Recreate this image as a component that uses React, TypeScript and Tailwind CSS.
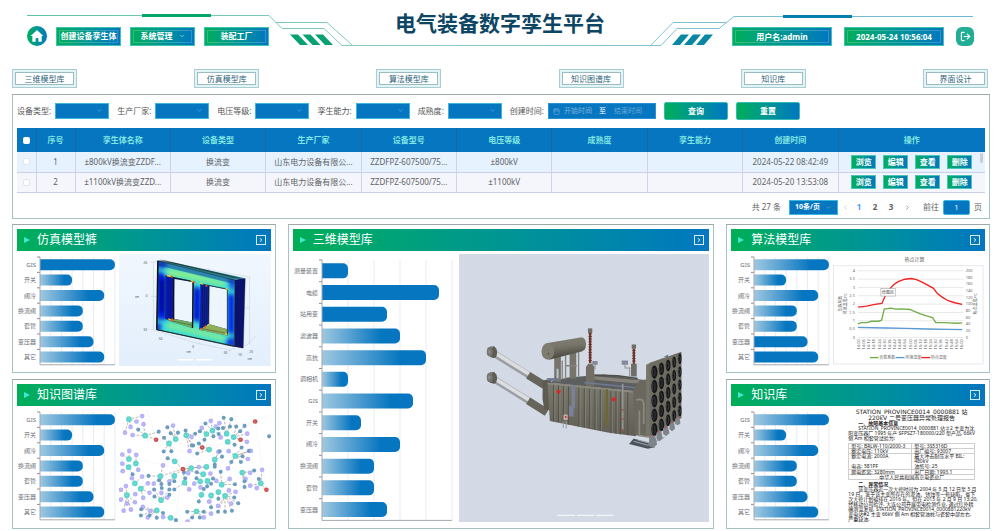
import React from 'react';
import { ChevronDown, ChevronLeft, ChevronRight, Calendar, LogOut } from 'lucide-react';

const tabs = ['三维模型库', '仿真模型库', '算法模型库', '知识图谱库', '知识库', '界面设计'];
const filters = ['设备类型', '生产厂家', '电压等级', '孪生能力', '成熟度'];
const columns = ['序号', '孪生体名称', '设备类型', '生产厂家', '设备型号', '电压等级', '成熟度', '孪生能力', '创建时间', '操作'];
const rows = [
  ['1', '±800kV换流变ZZDF...', '换流变', '山东电力设备有限公...', 'ZZDFPZ-607500/75...', '±800kV', '', '', '2024-05-22 08:42:49'],
  ['2', '±1100kV换流变ZZD...', '换流变', '山东电力设备有限公...', 'ZZDFPZ-607500/75...', '±1100kV', '', '', '2024-05-20 13:53:08'],
];
const actions = ['浏览', '编辑', '查看', '删除'];

type Bar = { name: string; value: number; solid?: boolean };

const smallBars: Bar[] = [
  { name: 'GIS', value: 7 },
  { name: '开关', value: 3 },
  { name: '阀冷', value: 6 },
  { name: '换流阀', value: 4 },
  { name: '套管', value: 4 },
  { name: '变压器', value: 5 },
  { name: '其它', value: 6 },
];
const simulationBars = smallBars.map((b, i) => ({ ...b, solid: i === 0 }));
const algorithmBars = smallBars.map((b, i) => ({ ...b, solid: i > 4 }));
const modelBars: Bar[] = [
  { name: '测量装置', value: 1, solid: true },
  { name: '电缆', value: 4.5, solid: true },
  { name: '站用变', value: 2.5, solid: true },
  { name: '滤波器', value: 3 },
  { name: '高抗', value: 4 },
  { name: '调相机', value: 1 },
  { name: 'GIS', value: 3.5 },
  { name: '开关', value: 1.5 },
  { name: '阀冷', value: 3 },
  { name: '换流阀', value: 2 },
  { name: '套管', value: 2 },
  { name: '变压器', value: 2.5 },
];

const gradient = 'bg-linear-to-r from-[#02ae56] to-[#0776c0]';

function HeaderLines() {
  return (
    <svg viewBox="0 0 1000 60" className="absolute inset-x-0 top-0 w-full" fill="none" aria-hidden="true">
      <defs>
        <linearGradient id="line" x1="0" x2="1000" y1="0" y2="0" gradientUnits="userSpaceOnUse">
          <stop offset="0" stopColor="#5cc49a" />
          <stop offset="0.45" stopColor="#8ecbcf" />
          <stop offset="1" stopColor="#6db5da" />
        </linearGradient>
      </defs>
      <g stroke="url(#line)">
        <path d="M27 15.5H269L282 28.5H324L342 45.5H661L677 28.5H719L734 16.5H973" />
        <path d="M276 22.5H327L352 45M651 45L673 22.5H726" />
      </g>
      <path d="M142 15.5H211" stroke="#05a768" strokeWidth="3" />
      <path d="M783 16.5H852" stroke="#0580ac" strokeWidth="3" />
      <path d="M290 34.500h8l10 10.500h-8zM302.500 34.500h8l10 10.500h-8zM315 34.500h8l10 10.500h-8z" fill="#06a173" />
      <path d="M681 34.500h8l-9 10.500h-8zM693 34.500h8l-9 10.500h-8zM705 34.500h8l-9 10.500h-8z" fill="#0787a3" />
    </svg>
  );
}

function Header() {
  const box = `${gradient} h-[19px] border border-[#3fc2b4] text-[8px] font-bold text-white outline outline-1 -outline-offset-4 outline-white/20`;
  return (
    <header className="relative h-[69px]">
      <HeaderLines />
      <div className="relative grid grid-cols-[1fr_auto_1fr]">
        <nav className="flex items-center gap-[9px] pt-[26px] pl-[27px]">
          <button aria-label="首页" className={`${gradient} flex size-5 items-center justify-center rounded-full text-white`}>
            <svg viewBox="0 0 24 24" className="size-4" fill="currentColor">
              <path d="M12 3 2.500 12H5v8.500h5V15h4v5.500h5V12h2.500z" />
            </svg>
          </button>
          <button className={`${box} w-[65px]`}>创建设备孪生体</button>
          <button className={`${box} flex w-[65px] items-center justify-center gap-1.5`}>
            系统管理 <ChevronDown size={6} strokeWidth={2} />
          </button>
          <button className={`${box} w-[65px]`}>装配工厂</button>
        </nav>
        <h1 className="pt-[9px] text-[21px] leading-7 font-bold text-[#0d4564]">电气装备数字孪生平台</h1>
        <div className="flex items-center justify-end gap-3 pt-[26px] pr-[26px]">
          <div className={`${box} w-[100px] text-center leading-[17px]`}>用户名:admin</div>
          <div className={`${box} w-[100px] text-center leading-[17px]`}>2024-05-24 10:56:04</div>
          <button aria-label="退出" className="flex h-[19px] w-[18px] items-center justify-center rounded-md bg-[#22ae95] text-white">
            <LogOut size={11} strokeWidth={2.5} />
          </button>
        </div>
      </div>
    </header>
  );
}

function Filters() {
  return (
    <form className="flex items-center gap-2 text-[8px] whitespace-nowrap text-[#555]">
      {filters.map((name) => (
        <label key={name} className="flex items-center gap-1">
          {name}:
          <span className="relative">
            <select className="block h-4 w-[54px] appearance-none border border-[#3cb6dc] bg-[#0776c0]" />
            <ChevronDown size={7} strokeWidth={1.5} className="pointer-events-none absolute top-1 right-1.5 text-[#8fbfe0]" />
          </span>
        </label>
      ))}
      <div className="flex items-center gap-1">
        <label htmlFor="start">创建时间:</label>
        <div className="flex h-4 w-[108px] items-center gap-1 border border-[#2a92d2] bg-[#0776c0] px-1 text-[7px] text-white">
          <Calendar size={7} strokeWidth={1.5} className="shrink-0 text-[#8fbfe0]" />
          <input id="start" placeholder="开始时间" className="w-[31px] min-w-0 placeholder:text-[#7db2dc]" />
          至
          <input aria-label="结束时间" placeholder="结束时间" className="ml-1 w-[31px] min-w-0 placeholder:text-[#6aa6d6]" />
        </div>
      </div>
      <button type="button" className={`${gradient} h-[18px] w-16 rounded-xs border border-[#35b9b0] font-bold text-white`}>查询</button>
      <button type="button" className={`${gradient} h-[18px] w-16 rounded-xs border border-[#35b9b0] font-bold text-white`}>重置</button>
    </form>
  );
}

function TwinTable() {
  return (
    <div className="relative mt-2">
      <table className="w-full table-fixed border-collapse text-center text-[8px] text-[#606266]">
        <colgroup>
          <col className="w-[19px]" />
          <col className="w-[39px]" />
          <col span={8} />
          <col className="w-[147px]" />
        </colgroup>
        <thead className="bg-[#0776c0] text-[#7fe6e2]">
          <tr className="h-6">
            <th className="border-r border-[#1b66a8]">
              <input type="checkbox" aria-label="全选" className="block mx-auto size-[7px] appearance-none rounded-xs bg-white" />
            </th>
            {columns.map((name) => (
              <th key={name} className="border-r border-[#1b66a8] font-bold last:border-r-0">{name}</th>
            ))}
          </tr>
        </thead>
        <tbody>
          {rows.map((row) => (
            <tr key={row[0]} className="h-5 border-b border-[#c9cfe8] odd:bg-[#e6f2fe] even:bg-[#f5f6fb]">
              <td className="border-r border-[#cfd3ea]">
                <input type="checkbox" aria-label={`选择 ${row[0]}`} className="block mx-auto size-[7px] appearance-none rounded-xs border border-[#e3e5ea] bg-white" />
              </td>
              {row.map((cell, i) => (
                <td key={i} className="overflow-hidden border-r border-[#cfd3ea] whitespace-nowrap">{cell}</td>
              ))}
              <td>
                <div className="flex justify-center gap-[7px]">
                  {actions.map((a) => (
                    <button key={a} className={`${gradient} h-3.5 w-[25px] border border-[#4cc4b8] leading-3 font-bold text-white`}>{a}</button>
                  ))}
                </div>
              </td>
            </tr>
          ))}
        </tbody>
      </table>
      <div className="absolute top-[25px] right-0.5 h-2.5 w-[3px] rounded-full bg-[#c9ced6]" />
    </div>
  );
}

function Pagination() {
  return (
    <div className="mt-[7px] flex items-center justify-end pr-[3px] text-[8px] text-[#606266]">
      <span className="mr-2">共 27 条</span>
      <span className="relative mr-px">
        <select aria-label="每页条数" className="block h-[15px] w-[49px] appearance-none border border-[#3cb6dc] bg-[#0776c0] pl-[5px] text-[7px] font-bold text-white">
          <option>10条/页</option>
        </select>
        <ChevronDown size={7} strokeWidth={1.5} className="pointer-events-none absolute top-1 right-1.5 text-[#8fbfe0]" />
      </span>
      <button aria-label="上一页" className="flex w-3 justify-center"><ChevronLeft size={7} className="text-[#b4b8c0]" /></button>
      <button className="w-4 font-bold text-[#409eff]">1</button>
      <button className="w-4 font-bold">2</button>
      <button className="w-4 font-bold">3</button>
      <button aria-label="下一页" className="flex w-4 justify-center"><ChevronRight size={7} /></button>
      <label className="ml-2 flex items-center gap-1">
        前往
        <input defaultValue="1" className="h-[15px] w-[27px] rounded-xs border border-[#3cb6dc] bg-[#0776c0] text-center text-[7px] text-white" />
        页
      </label>
    </div>
  );
}

function Card({ title, children }: { title: string; children: React.ReactNode }) {
  return (
    <section className="flex flex-1 flex-col border border-[#a5c3c4] border-t-[#9fa9ab] px-1 pt-1 pb-1.5">
      <div className={`${gradient} flex h-[22px] items-center pr-[5px] pl-[7px] text-white`}>
        <svg viewBox="0 0 18 18" className="size-1.5 text-[#45e6cf]" aria-hidden="true">
          <path d="M0 0 18 9 0 18z" fill="currentColor" />
        </svg>
        <h2 className="ml-[7px] flex-1 text-xs leading-[22px]">{title}</h2>
        <button aria-label={`${title}详情`} className="flex size-2.5 items-center justify-center border border-[#d5ecf6]">
          <ChevronRight size={6} strokeWidth={4} />
        </button>
      </div>
      <div className="mt-[3px] flex flex-1">{children}</div>
    </section>
  );
}

type ChartProps = {
  bars: Bar[];
  width: number;
  height: number;
  axis: number;
  top: number;
  step: number;
  unit: number;
  thick: number;
  ticks: number;
  label: number;
};

function BarChart({ bars, width, height, axis, top, step, unit, thick, ticks, label }: ChartProps) {
  const bottom = top + step * bars.length;
  return (
    <svg viewBox={`0 0 ${width} ${height}`} className="w-full" role="img">
      <defs>
        <linearGradient id="bar">
          <stop offset="0" stopColor="#9fc8e1" />
          <stop offset="0.75" stopColor="#0776c0" />
        </linearGradient>
      </defs>
      {Array.from({ length: ticks }, (_, i) => (
        <path key={i} d={`M${axis + unit * (i + 1)} ${top}V${bottom}`} stroke="#e8ebf5" />
      ))}
      {bars.map((b, i) => {
        const y = top + step * i + (step - thick) / 2;
        const w = b.value * unit;
        const r = 5;
        return (
          <g key={b.name}>
            <path d={`M${axis - 3} ${top + step * i}H${axis}`} stroke="#8a8e96" />
            <path
              d={`M${axis} ${y}h${w - r}a${r} ${r} 0 0 1 ${r} ${r}v${thick - 2 * r}a${r} ${r} 0 0 1 ${-r} ${r}H${axis}z`}
              fill={b.solid ? '#0776c0' : 'url(#bar)'}
            />
            <text x={axis - 4} y={y + thick / 2 + 2} textAnchor="end" fontSize={label} fill="#6e7079">{b.name}</text>
          </g>
        );
      })}
      <path d={`M${axis} ${top}V${bottom}H${axis + unit * ticks}`} fill="none" stroke="#a4a8b0" />
    </svg>
  );
}

function SmallChart({ bars }: { bars: Bar[] }) {
  return (
    <div className="w-[102px] shrink-0">
      <BarChart bars={bars} width={102} height={112} axis={23} top={3} step={15.4} unit={10.7} thick={11} ticks={7} label={6} />
    </div>
  );
}

function CoreField() {
  return (
    <svg viewBox="356 104 458 333" className="w-full min-w-0 flex-1" preserveAspectRatio="none" role="img">
      <defs>
        <linearGradient id="sky" x1="0" y1="0" x2="0" y2="1">
          <stop offset="0" stopColor="#f1f7fe" />
          <stop offset="1" stopColor="#e3effc" />
        </linearGradient>
        <clipPath id="core">
          <path d="M475 124 706 181 704 378 470 328z" />
        </clipPath>
        <filter id="soft"><feGaussianBlur stdDeviation="7" /></filter>
      </defs>
      <path d="M356 104H814V437H356z" fill="url(#sky)" />
      <g stroke="#b3b9c2" fill="none">
        <path d="M475 124 460 128V328L590 368 690 388 745 372 770 345M475 124 625 150 750 172V371M452 128h8M450 229h10M452 328h8M500 340l-8 8M600 364l-6 8M690 386v8M625 145v8M736 262l14 4M460 229 475 232" />
      </g>
      <path d="M475 124 705 180 737 176 520 129z" fill="#2b8f9c" />
      <path d="M706 180 737 176 731 382 704 378z" fill="#08127e" />
      <path d="M475 124 706 180 704 378 470 328z" fill="#38dcd6" />
      <g clipPath="url(#core)">
        <g filter="url(#soft)">
          <path d="M468 156 502 164V300L466 296z" fill="#001ce0" />
          <path d="M478 180h16v95h-16z" fill="#000a90" />
          <path d="M580 200 604 206V306L578 300z" fill="#0018d8" />
          <path d="M684 222 706 224V342L684 338z" fill="#0026e8" />
          <path d="M470 118 500 126V148L466 144z" fill="#0834dc" />
          <path d="M682 170 708 178V214L690 204z" fill="#0a52e8" />
          <path d="M464 300 486 316 480 335H464z" fill="#0834dc" />
          <path d="M680 355 710 350V384L678 374z" fill="#0834dc" />
          <path d="M500 148 576 160 680 188 676 200 590 182 500 166z" fill="#8df08a" />
          <path d="M502 306 582 322 680 346 670 362 500 322z" fill="#7bea9a" />
        </g>
        <path d="M475 125 706 181 705 193 475 138z" fill="#123a9e" fillOpacity="0.55" />
      </g>
      <path d="M496 168 580 184 578 323 515 304 495 296z" fill="#10346c" />
      <path d="M498 170 521 178 519 296 497 294z" fill="#0718b4" />
      <path d="M523 178 578 187 577 307 521 296z" fill="#edf5fd" />
      <path d="M521 296 577 307V323L508 303z" fill="#6fae62" />
      <path d="M601 192 683 208V345L598 328z" fill="#1c46b8" />
      <path d="M603 196 627 199V312L600 327z" fill="#0c1f9c" />
      <path d="M629 199 683 209V327L627 311z" fill="#edf5fd" />
      <path d="M627 311 683 327V345L598 328z" fill="#8fae58" />
      <g stroke="#111" fill="none">
        <path d="M475 124 706 181 704 378 470 328z" strokeWidth="2" />
        <path d="M473 124 470 328" strokeWidth="4" />
        <path d="M521 176V298M580 184 578 323" strokeWidth="4" />
        <path d="M627 198V314M683 208V345M498 169 580 186M601 192 683 208M470 328 731 382" strokeWidth="2" />
        <path d="M480 122 710 176M486 122 718 176M494 124 728 177M512 177V300M505 173V298M608 197V325M614 197V320M620 198V317M711 180 709 379M717 179 714 380M723 178 720 381M730 177 726 382M737 176 731 382" />
        <path d="M515 302 577 315M606 325 683 339" />
      </g>
      <path d="M500 168l12 3M505 296l8 4M573 182l8 5M600 190l10 3M678 206l6 3M622 316l8-4M677 337l5 7" stroke="#e8d23a" strokeWidth="4" />
      <g fill="#f0561e">
        <circle cx="516" cy="171" r="3" /><circle cx="583" cy="188" r="3" /><circle cx="620" cy="198" r="3" />
        <circle cx="516" cy="299" r="4" /><circle cx="604" cy="325" r="3" /><circle cx="616" cy="319" r="3" />
      </g>
      <g fill="#444" fontSize="9">
        <text x="428" y="133">-50</text><text x="437" y="232">0</text><text x="430" y="332">50</text>
        <text x="404" y="233">cm</text><text x="474" y="360">-50</text><text x="577" y="381">0</text>
        <text x="560" y="398">cm</text><text x="672" y="401">50</text><text x="716" y="407">10</text>
        <text x="747" y="397">-10</text><text x="744" y="418">cm</text>
      </g>
      <path d="M534 417h46M590 417h46" stroke="#fff" strokeWidth="4" />
    </svg>
  );
}

// device nodes, the other two kinds hang off the closest one
const teal = [
  [386, 134], [435, 183], [507, 206], [527, 193], [559, 182], [620, 178], [638, 168], [681, 177], [702, 187], [684, 201],
  [628, 224], [645, 254], [707, 243], [386, 252], [407, 265], [385, 276], [404, 324], [422, 340], [380, 359], [481, 303],
  [523, 302], [524, 259], [483, 374], [470, 404], [512, 426], [574, 279], [620, 275], [610, 297], [554, 322], [601, 318],
  [623, 317], [605, 358], [666, 328], [656, 350], [634, 360], [676, 361], [728, 292], [784, 324], [590, 407],
];
const violet = [
  [426, 125], [409, 141], [391, 157], [430, 149], [374, 174], [397, 181], [519, 153], [633, 139], [659, 146], [648, 156],
  [575, 187], [569, 229], [606, 160], [743, 177], [742, 201], [663, 188], [656, 231], [687, 229], [754, 228], [745, 252],
  [685, 280], [366, 239], [387, 228], [408, 240], [366, 266], [367, 288], [489, 271], [414, 284], [426, 304], [395, 309],
  [377, 332], [362, 343], [362, 372], [380, 384], [404, 380], [405, 356], [429, 367], [428, 394], [448, 352], [443, 324],
  [461, 325], [370, 405], [392, 402], [450, 406], [443, 425], [489, 424], [597, 276], [632, 295], [565, 294], [583, 325],
  [568, 342], [602, 336], [650, 317], [690, 311], [688, 345], [708, 349], [695, 384], [655, 391], [628, 378], [788, 284],
  [752, 293], [738, 311], [772, 338], [752, 331], [563, 437], [612, 425], [634, 414], [508, 318], [484, 352], [502, 366],
];
const steel = [
  [414, 165], [476, 171], [492, 189], [502, 158], [534, 174], [512, 176], [557, 168], [586, 177], [600, 170], [672, 130],
  [695, 134], [617, 147], [656, 162], [670, 160], [691, 156], [710, 156], [735, 154], [722, 170], [641, 185], [657, 178],
  [580, 212], [597, 206], [614, 195], [592, 236], [576, 212], [705, 210], [726, 218], [748, 228], [729, 244], [660, 229],
  [667, 245], [695, 261], [645, 268], [663, 290], [724, 261], [809, 185], [491, 230], [514, 229], [503, 250], [477, 315],
  [445, 302], [397, 297], [462, 342], [485, 338], [508, 326], [523, 318], [523, 342], [508, 342], [463, 363], [508, 358],
  [484, 326], [556, 309], [552, 292], [591, 291], [590, 309], [640, 310], [645, 275], [612, 341], [622, 333], [634, 325],
  [597, 378], [634, 395], [656, 370], [676, 408], [655, 408], [697, 405], [716, 383], [704, 366], [706, 327], [735, 335],
  [778, 311], [764, 286], [735, 318], [423, 401], [422, 419], [448, 419], [470, 426], [489, 412], [562, 408], [577, 425],
  [600, 425], [612, 408], [528, 433],
];
const red = [[767, 141], [468, 195], [723, 195], [607, 218], [549, 282], [801, 343]];

function nearest(x: number, y: number) {
  return teal.reduce((best, t) => (Math.hypot(t[0] - x, t[1] - y) < Math.hypot(best[0] - x, best[1] - y) ? t : best));
}

function KnowledgeGraph() {
  return (
    <svg viewBox="356 104 458 333" className="w-full min-w-0 flex-1" preserveAspectRatio="none" role="img">
      <g stroke="#f0ebe9">
        {red.flatMap(([x, y], i) => red.slice(i + 1).map(([a, b]) => <path key={`${x}-${a}`} d={`M${x} ${y}L${a} ${b}`} />))}
        <path d="M468 195 440 104M468 195 356 104M549 282 525 437M767 141 814 120M723 195 700 104M607 218 640 104M549 282 356 240" />
      </g>
      <g stroke="#a8958f" strokeDasharray="8 4" strokeWidth="2">
        {[...violet, ...steel]
          .filter(([x]) => x < 800)
          .map(([x, y], i) => {
            const [a, b] = nearest(x, y);
            return <path key={i} d={`M${x} ${y}L${a} ${b}`} />;
          })}
        <path d="M549 282 574 279 620 275M549 282 481 303M549 282 523 302M549 282 524 259M549 282 554 322M549 282 610 297M607 218 628 224M723 195 702 187M801 343 784 324M468 195 435 183" />
      </g>
      {violet.map(([x, y], i) => <circle key={i} cx={x} cy={y} r="7" fill="#b3affa" />)}
      {steel.map(([x, y], i) => <circle key={i} cx={x} cy={y} r="6" fill="#6a9dbe" />)}
      {teal.map(([x, y], i) => <circle key={i} cx={x} cy={y} r="8.500" fill="#5cd6cc" />)}
      {red.map(([x, y], i) => <circle key={i} cx={x} cy={y} r="7" fill="#cc4f4f" />)}
      <g stroke="#fff" strokeOpacity="0.7">
        {[...teal, ...red, ...violet].map(([x, y], i) => <path key={i} d={`M${x - 3} ${y}h6`} />)}
      </g>
    </svg>
  );
}

function Transformer() {
  const fans = [0, 1, 2, 3, 4];
  return (
    <svg viewBox="25 -138 750 801" className="h-full w-full min-w-0 flex-1 bg-[#d3dae5]" role="img">
      <defs>
        <linearGradient id="tube" x1="0" y1="0" x2="0.2" y2="1">
          <stop offset="0" stopColor="#827f72" />
          <stop offset="0.45" stopColor="#77746a" />
          <stop offset="1" stopColor="#47453c" />
        </linearGradient>
        <linearGradient id="tank" x1="0" y1="0" x2="0" y2="1">
          <stop offset="0" stopColor="#7b796e" />
          <stop offset="1" stopColor="#615f55" />
        </linearGradient>
      </defs>
      {[0, 77].map((dy) => (
        <g key={dy} transform={`translate(0 ${dy})`}>
          <path d="M128 158 240 228" stroke="#9a9da3" strokeWidth="20" />
          <path d="M130 156 240 224" stroke="#dcdde0" strokeWidth="11" />
          <path d="M232 224 288 259" stroke="#66645b" strokeWidth="23" />
          <ellipse cx="129" cy="156" rx="10" ry="17" fill="#5d5d55" />
          <ellipse cx="117" cy="154" rx="9" ry="14" fill="#77766c" />
          <ellipse cx="116" cy="154" rx="3" ry="6" fill="#8f9292" />
          <path d="M118 140h14M118 169h12" stroke="#55554d" strokeWidth="3" />
        </g>
      ))}
      <path d="M276 240 300 235V330L280 325 275 295z" fill="#5d5b52" />
      <path d="M290 246 350 231 460 222 590 240 548 272z" fill="#5d5e60" />
      <path d="M310 168h20v76h-20zM356 158h20v76h-20z" fill="#77756b" />
      <path d="M317 205h6v30h-6z" fill="#bcc4cf" />
      <path d="M344 165V196H378M344 196v40M383 155V228M334 180v56" fill="none" stroke="#83827c" strokeWidth="4" />
      <path d="M290 128 388 111C400 110 405 120 405 132S400 150 392 153L295 178z" fill="url(#tube)" />
      <ellipse cx="291" cy="153" rx="19" ry="25" fill="#7e7b70" />
      <circle cx="293" cy="160" r="3" fill="#5a584f" />
      <path d="M405 200 412 190H424L430 200V258H405z" fill="#716f65" />
      <path d="M414 96h7v92h-7z" fill="#7d3628" />
      <path d="M413 100h9M413 108h9M413 116h9M413 124h9M413 132h9M413 140h9M413 148h9M413 156h9M413 164h9M413 172h9M413 180h9" stroke="#5a2d25" strokeWidth="3" />
      <path d="M411 84h13v14h-13z" fill="#6e6d66" />
      <path d="M545 144h7v48h-7z" fill="#7d3c2e" />
      <path d="M544 150h9M544 158h9M544 166h9M544 174h9M544 182h9" stroke="#5a2d25" strokeWidth="3" />
      <path d="M542 132h13v13h-13zM540 190h17v38h-17z" fill="#6e6d66" />
      <path d="M512 180h19v13h-19zM424 182h16v11h-16z" fill="#85889a" />
      <path d="M522 193v10h14v24M432 193v14" fill="none" stroke="#8a8c8e" strokeWidth="3" />
      <path d="M430 232 545 243H570" stroke="#85837a" strokeWidth="10" fill="none" />
      <path d="M430 224 500 226 560 234" stroke="#504f48" strokeWidth="5" fill="none" />
      <path d="M290 235h30v4h-30zM400 246 560 262" stroke="#6f7c94" strokeWidth="4" />
      <path d="M290 247 360 252 548 272 555 407 470 396 297 361z" fill="url(#tank)" />
      <path d="M308 252v111M323 253v113M338 254v115M353 255v117M384 257v121M400 259v122M416 260v123M432 262v125M448 264v127M480 267v131M495 268v132M508 270v132M530 272v132" stroke="#54534a" strokeWidth="3" />
      <path d="M312 252v111M327 253v113M342 254v115M388 257v121M404 259v122M420 260v123M436 262v125M452 264v127M484 267v131M499 268v132" stroke="#8b897d" strokeWidth="2" />
      <path d="M290 249 548 274" stroke="#8c8a80" strokeWidth="5" />
      <path d="M362 254v62h-8v32h14v-24h4v-70z" fill="#7a819a" />
      <path d="M338 342h12v16h-12z" fill="#c7b8b9" />
      <path d="M342 346h5v7h-5z" fill="#d33" />
      <path d="M337 362v20M346 362v22" stroke="#9aa0a8" strokeWidth="3" />
      <path d="M464 266h7v110h-7z" fill="#6c6930" />
      <path d="M515 250V388" stroke="#93968f" strokeWidth="5" />
      <path d="M515 325v6M515 352v6M515 385v6" stroke="#bd4b40" strokeWidth="4" />
      <path d="M316 269h14l-3 10h-8zM481 292h14l-3 10h-8z" fill="#e0252a" />
      <path d="M546 268 565 240 590 236V408L552 404z" fill="#69675e" />
      <path d="M556 298c16-4 22 0 22 16V370M565 330V405L596 410" fill="none" stroke="#8c8b80" strokeWidth="5" />
      <path d="M585 193 600 186V410L585 405z" fill="#77756a" />
      <path d="M596 187 691 154V352L596 410z" fill="#6f6d62" />
      <path d="M638 170 651 162V170z" fill="#6a7690" />
      {fans.map((c) =>
        fans.map((r) => {
          const cx = [610, 631, 651, 669, 686][c];
          const cy = 215 - c * 10 + r * (43 - c);
          return (
            <g key={`${c}-${r}`}>
              <ellipse cx={cx} cy={cy} rx={9 - c} ry={20 - c} fill="#16171a" />
              <ellipse cx={cx - 2} cy={cy} rx={4} ry={12 - c} fill="none" stroke="#4b4c4c" strokeWidth="2" />
            </g>
          );
        }),
      )}
      <path d="M534 430 548 414 600 430 612 440 590 444z" fill="#4c525b" />
      <path d="M548 422 590 434 640 410M560 418 600 428" stroke="#9aa2aa" strokeWidth="3" fill="none" />
      <path d="M594 410l18-6 6 28-12 10-12-6zM616 396l14-6 5 24-10 8-9-6zM636 382l14-6 5 22-10 8-9-6zM655 370l13-6 4 20-9 8-8-6zM672 354l12-6 4 20-8 6-8-4z" fill="#7e848a" />
      <path d="M598 406h8M620 394h7M640 380h7M659 366h6M675 352h6" stroke="#c65044" strokeWidth="3" />
      <path d="M320 644h52M378 644h52M436 644h52" stroke="#f4f6fa" strokeWidth="4" />
    </svg>
  );
}

const times = [
  '14:00', '14:06', '14:12', '14:18', '14:24', '14:30', '14:36', '14:42', '14:48', '14:54', '15:00',
  '15:06', '15:12', '15:18', '15:24', '15:30', '15:36', '15:42', '15:48', '15:54', '16:00',
];

function HotspotChart() {
  return (
    <svg viewBox="339 104 456 333" className="w-full min-w-0 flex-1" preserveAspectRatio="none" role="img">
      <text x="584" y="126" textAnchor="middle" fontSize="15" fill="#555">热点计算</text>
      <rect x="341" y="139" width="449" height="292" fill="#fff" stroke="#d9dce0" strokeWidth="2" />
      {['4', '3.5', '3', '2.5', '2', '1.5', '1', '0.5', '0'].map((v, i) => (
        <g key={v}>
          <path d={`M414 ${154 + i * 24.75}H731`} stroke="#dedede" strokeWidth="2" />
          <text x="405" y={158 + i * 24.75} textAnchor="end" fontSize="12" fill="#666">{v}</text>
        </g>
      ))}
      {[200, 180, 160, 140, 120, 100, 80, 60, 40, 20, 0].map((v, i) => (
        <text key={v} x="738" y={158 + i * 19.8} fontSize="12" fill="#666">{v}</text>
      ))}
      {times.map((t, i) => (
        <text key={t} transform={`translate(${420 + i * 15.5} 388) rotate(-90)`} fontSize="12" fill="#555">{t}</text>
      ))}
      <g fontSize="12" fill="#666" textAnchor="middle">
        <text transform="translate(367 252) rotate(-90)">负载系数</text>
        <text transform="translate(382 252) rotate(-90)">环境温度/℃</text>
        <text transform="translate(771 252) rotate(-90)">热点温度/℃</text>
      </g>
      <g fill="none" strokeWidth="4">
        <path d="M414 322 500 324 560 325 620 327 680 328 727 329" stroke="#5b9bd5" />
        <path d="M414 312 424 308 440 308 455 304 475 304 485 301 493 268 512 265 528 268 545 267 570 269 585 275 600 281 620 288 638 293 648 308 665 308 690 309 712 310 727 309" stroke="#70ad47" />
        <path d="M414 262 440 259 465 254 486 251 496 228 508 210 520 196 535 186 555 179 574 177 590 180 605 187 622 196 641 206 652 221 668 233 685 243 705 249 727 254" stroke="#f0201f" />
      </g>
      <rect x="483" y="207" width="43" height="22" fill="#fff" stroke="#aaa" strokeWidth="2" />
      <text x="504" y="223" textAnchor="middle" fontSize="12" fill="#555">绘图区</text>
      <g strokeWidth="4">
        <path d="M450 412h26" stroke="#70ad47" />
        <path d="M527 412h27" stroke="#5b9bd5" />
        <path d="M604 412h27" stroke="#f0201f" />
      </g>
      <g fontSize="12" fill="#666">
        <text x="478" y="416">负载系数</text>
        <text x="556" y="416">环境温度</text>
        <text x="633" y="416">热点温度</text>
      </g>
    </svg>
  );
}

function ReportPage() {
  return (
    <article className="min-w-0 flex-1 pr-2.5 pl-[15px] text-[5px] leading-[5px] whitespace-nowrap text-[#222]">
      <h3 className="text-center font-['DejaVu_Sans','Noto_Sans_CJK_SC',sans-serif] text-[6px] leading-[6px]">
        STATION_PROVINCE0014_0000881 站<br />220kV 二号变压器异常处理报告
      </h3>
      <h4 className="pl-2.5 font-bold">一、故障基本信息</h4>
      <p className="pl-2.5">STATION_PROVINCE0014_0000881 站＃2 主变为沈</p>
      <p>阳变压器厂 1995 年产 SFPSZ7-180000/220 型产品, 66kV</p>
      <p>侧 Am 相套管试验为:</p>
      <table className="my-0.5 w-full table-fixed border-collapse border border-[#cfcfcf] leading-[4px]">
        <tbody>
          <tr className="border-b border-[#cfcfcf]">
            <td className="border-r border-[#cfcfcf] pl-0.5">型号: BRLW-110/2000-3</td>
            <td className="pl-0.5">型号: 3S5316D</td>
          </tr>
          <tr className="border-b border-[#cfcfcf]">
            <td className="border-r border-[#cfcfcf] pl-0.5">额定电压: 110kV</td>
            <td className="pl-0.5">出厂编号: 93007</td>
          </tr>
          <tr className="border-b border-[#cfcfcf] leading-[5px]">
            <td className="border-r border-[#cfcfcf] pl-0.5">额定电流: 2000A<br /><br />电容: 581PF</td>
            <td className="pl-0.5">最大冲击耐压水平 BIL:<br />480kV<br />油纸号: 25</td>
          </tr>
          <tr className="border-b border-[#cfcfcf]">
            <td className="border-r border-[#cfcfcf] pl-0.5">爬电距离: 3280mm</td>
            <td className="pl-0.5">出厂日期: 1993.1</td>
          </tr>
          <tr>
            <td colSpan={2} className="text-center">中华人民共和国南京电瓷总厂</td>
          </tr>
        </tbody>
      </table>
      <h4 className="pl-2.5 font-bold">二、异常情况</h4>
      <p className="pl-2.5">该变压器近一次大修时间为 2004 年 5 月 12 日至 5 月</p>
      <p>19 日。鉴于该主变所存在的渗油、锈蚀等一些缺陷，省下</p>
      <p>次大修计划编排在 2016 年。但在 2015 年 2 月 9 日 13:20,</p>
      <p>经移动公司验评, 大连公司开展带电检测作业, 通过红外精</p>
      <p>确测温发现, STATION_PROVINCE0014_0000881220kV</p>
      <p>变电站#2 主变 66kV 侧 Am 相套管油枕与瓷套中部左右,</p>
      <p>严重缺油.</p>
    </article>
  );
}

export default function App() {
  return (
    <div className="bg-white font-['Noto_Sans','Noto_Sans_CJK_SC',sans-serif]">
      <Header />
      <nav className="flex justify-between px-3">
        {tabs.map((tab) => (
          <button key={tab} className="h-[19px] w-[65px] border border-[#a9cdd3] bg-[#e2f4f4] p-0.5">
            <span className="flex h-full items-center justify-center border border-[#9bbcc5] bg-white text-[8px] text-[#2c6379]">{tab}</span>
          </button>
        ))}
      </nav>
      <main className="pt-1.5 pr-2.5 pl-3">
        <section className="border border-[#a5c3c4] border-t-[#9fa9ab] px-1 pt-[7px] pb-[3px]">
          <Filters />
          <TwinTable />
          <Pagination />
        </section>
        <div className="mt-[5px] grid grid-cols-[264fr_427fr_264fr] gap-3">
          <div className="flex min-w-0 flex-col gap-1.5">
            <Card title="仿真模型裤">
              <SmallChart bars={simulationBars} />
              <CoreField />
            </Card>
            <Card title="知识图谱库">
              <SmallChart bars={smallBars} />
              <KnowledgeGraph />
            </Card>
          </div>
          <div className="flex min-w-0 flex-col">
            <Card title="三维模型库">
              <div className="w-[166px] shrink-0">
                <BarChart bars={modelBars} width={166} height={267} axis={29} top={6} step={21.7} unit={26} thick={15} ticks={5} label={6} />
              </div>
              <Transformer />
            </Card>
          </div>
          <div className="flex min-w-0 flex-col gap-1.5">
            <Card title="算法模型库">
              <SmallChart bars={algorithmBars} />
              <HotspotChart />
            </Card>
            <Card title="知识库">
              <SmallChart bars={smallBars} />
              <ReportPage />
            </Card>
          </div>
        </div>
      </main>
    </div>
  );
}
